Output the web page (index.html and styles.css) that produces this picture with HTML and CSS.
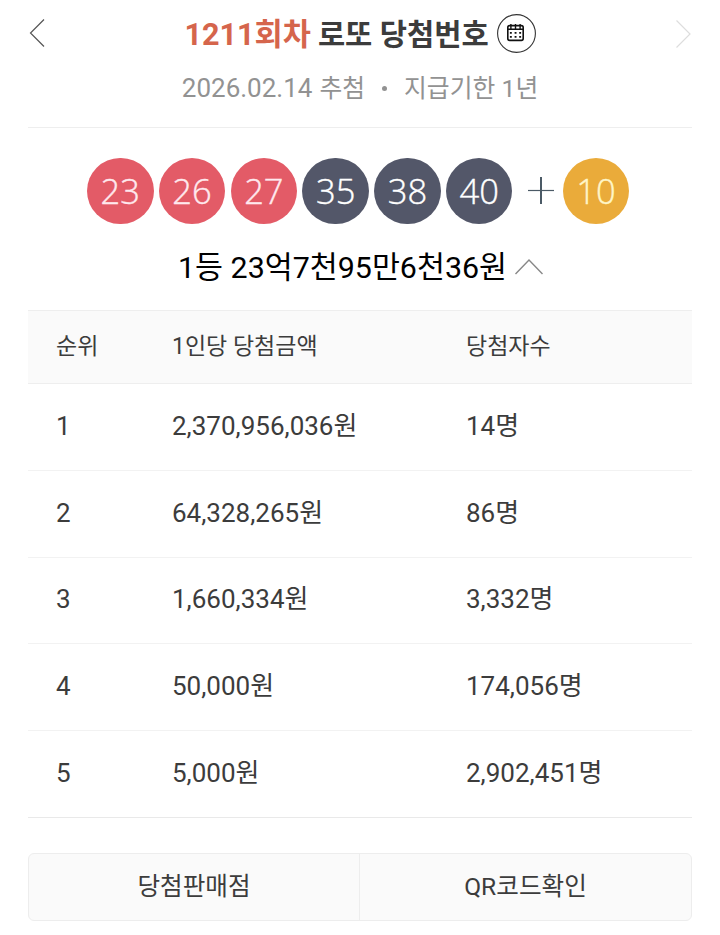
FILE: index.html
```html
<!DOCTYPE html>
<html lang="ko">
<head>
<meta charset="utf-8">
<title>로또 당첨번호</title>
<link rel="stylesheet" href="styles.css">
</head>
<body>
<main class="lotto">
  <header class="head">
    <svg class="arrow" width="16" height="30" viewBox="0 0 16 30"><path d="M15 1.5 1.5 15 15 28.5"/></svg>
    <div class="heading">
      <h1 class="title"><span class="round">1211회차</span><span class="name">로또 당첨번호</span>
        <svg class="calendar" width="39" height="39" viewBox="0 0 39 39">
          <circle cx="19.5" cy="19.5" r="18.9"/>
          <rect class="frame" x="10.8" y="11.6" width="15.4" height="14.8" rx="1.8"/>
          <path class="rings" d="M13.900 10v4.400M18.500 10v4.400M23.100 10v4.400M10.700 15.300h15.600"/>
          <path class="days" d="M12.900 18.900h1.900M17.600 18.900h1.900M22.200 18.900h1.900M12.900 22.900h1.900M17.600 22.900h1.900M22.200 22.900h1.900"/>
        </svg>
      </h1>
      <p class="sub"><span class="date">2026.02.14</span><span class="drawn">추첨</span><i class="dot"></i><span class="limit">지급기한 1년</span></p>
    </div>
    <svg class="arrow off" width="16" height="30" viewBox="0 0 16 30"><path d="M1.500 1.500 15 15 1.500 28.500"/></svg>
  </header>

  <div class="balls">
    <span class="ball red">23</span><span class="ball red">26</span><span class="ball red">27</span><span class="ball gray">35</span><span class="ball gray">38</span><span class="ball gray">40</span>
    <svg class="plus" width="28" height="28" viewBox="0 0 28 28"><path d="M1 13.500h26"/><path class="v" d="M14 0v27"/></svg>
    <span class="ball gold">10</span>
  </div>

  <p class="prize"><span>1등 23억7천95만6천36원</span><svg width="30" height="18" viewBox="0 0 30 18"><path d="M1.500 16 15 2 28.500 16"/></svg></p>

  <div class="table">
    <div class="row th"><span>순위</span><span>1인당 당첨금액</span><span>당첨자수</span></div>
    <div class="row"><span>1</span><span>2,370,956,036원</span><span>14명</span></div>
    <div class="row"><span>2</span><span>64,328,265원</span><span>86명</span></div>
    <div class="row"><span>3</span><span>1,660,334원</span><span>3,332명</span></div>
    <div class="row"><span>4</span><span>50,000원</span><span>174,056명</span></div>
    <div class="row"><span>5</span><span>5,000원</span><span>2,902,451명</span></div>
  </div>

  <nav class="links"><a>당첨판매점</a><a>QR코드확인</a></nav>
</main>
</body>
</html>
```
FILE: styles.css
```css
* { box-sizing: border-box; margin: 0; padding: 0; }
body { background: #fff; color: #3c3c3c; font-family: Roboto, "Noto Sans CJK KR", sans-serif; }
svg { fill: none; flex: none; }
.lotto { width: 720px; height: 935px; padding: 0 28px; overflow: hidden; }
.head { display: flex; justify-content: space-between; height: 128px; border-bottom: 1px solid #eee; }
.arrow { margin-top: 18px; margin-left: 1px; stroke: #555; stroke-width: 1.2; }
.arrow.off { margin: 19px 1px 0 0; stroke: #ddd; }
.heading { padding-top: 13px; display: flex; flex-direction: column; align-items: center; }
.title { display: flex; align-items: center; height: 40px; font-size: 29.6px; line-height: 40px; font-weight: 700; white-space: nowrap; }
.round { padding-top: 4px; color: #d5654c; font-size: 30.6px; margin-right: 7px; }
.name { padding-top: 4px; margin-right: 8px; }
.calendar circle { stroke: #333; stroke-width: 1.1; }
.calendar .frame { stroke: #111; stroke-width: 1.6; }
.calendar .rings { stroke: #111; stroke-width: 1.4; }
.calendar .days { stroke: #111; stroke-width: 1.7; }
.sub { display: flex; align-items: center; margin-top: 15px; height: 40px; line-height: 40px; font-size: 24.8px; color: #929292; white-space: nowrap; }
.date { font-size: 26px; }
.drawn { margin-left: 7px; padding-top: 2px; }
.limit { padding-top: 2px; }
.dot { width: 5px; height: 5px; border-radius: 50%; background: #929292; margin: 0 17px; }
.balls { display: flex; align-items: center; height: 67px; margin: 29.5px 0 0 59px; }
.ball { width: 66.5px; height: 66.5px; margin-right: 5.3px; border-radius: 50%; color: #fff; font: 300 34.500px/66px "Open Sans", sans-serif; text-align: center; -webkit-text-stroke: .4px currentColor; }
.red { background: #e35b67; color: #ffe9ee; }
.gray { background: #535769; }
.gold { background: #eaab3a; color: #fff6c8; margin: 0; }
.plus { margin: 0 8px 0 9px; stroke: #4b5a66; stroke-width: 1.2; }
.plus .v { stroke-width: 2; }
.prize { display: flex; align-items: center; justify-content: center; height: 44px; margin-top: 20.5px; font-size: 30.4px; line-height: 44px; color: #000; }
.prize span { padding: 2px 0 0 2px; }
.prize svg { margin-left: 7px; stroke: #888; stroke-width: 1.4; }
.table { margin-top: 21px; border-top: 1px solid #eee; }
.row { display: grid; grid-template-columns: 116px 294px 1fr; align-items: center; height: 86.8px; padding: 0 0 2px 28px; border-bottom: 1px solid #f2f2f2; font-size: 26px; line-height: 40px; }
.row.th { height: 73px; padding-bottom: 0; background: #fafafa; font-size: 23px; border-color: #eee; }
.row:last-child { border-color: #e9e9e9; }
.links { display: flex; height: 68px; margin-top: 35px; border: 1px solid #ededed; border-radius: 6px; background: #fafafa; font-size: 24.6px; line-height: 65px; text-align: center; }
.links a { flex: 1; }
.links a:first-child { flex: none; width: 330px; }
.links a + a { border-left: 1px solid #ededed; }
```
